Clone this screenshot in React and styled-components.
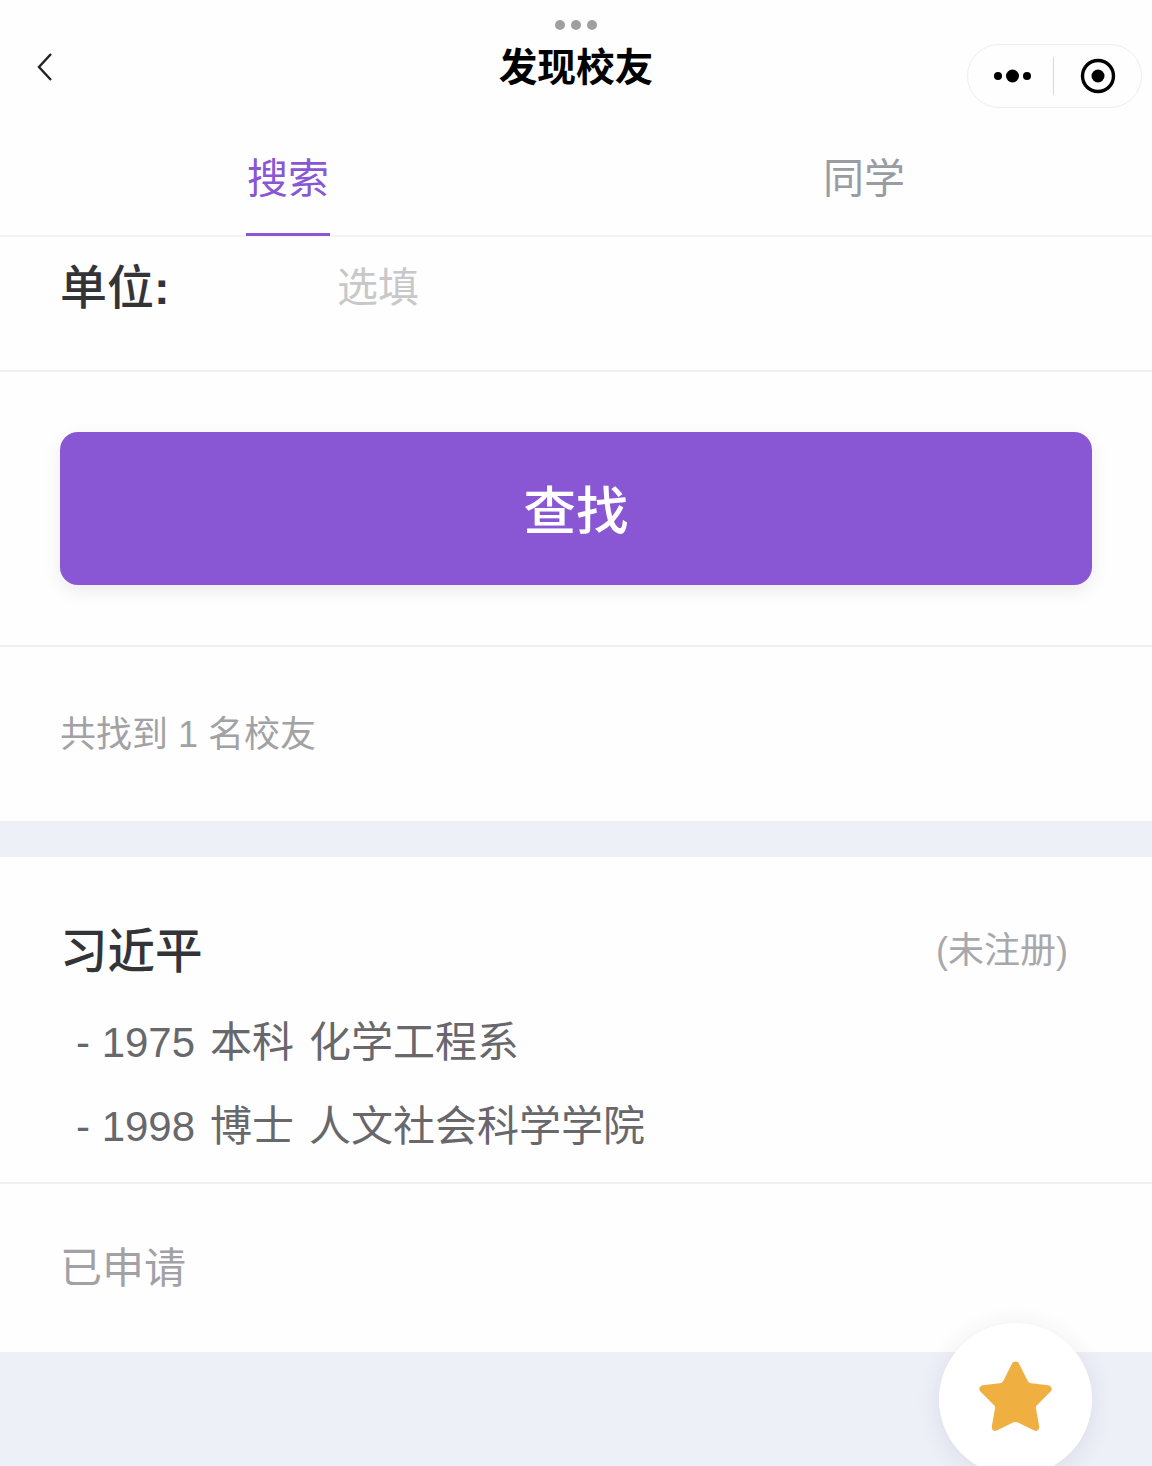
import React from 'react';
import styled, { createGlobalStyle } from 'styled-components';

const GlobalStyle = createGlobalStyle`
  html, body {
    margin: 0;
    padding: 0;
    background: #eef0f8;
  }
  body {
    font-family: "Liberation Sans", "Noto Sans CJK SC", sans-serif;
  }
`;

// //////////////// PAGE //////////////// //
const Page = styled.div`
  position: relative;
  width: 1152px;
  height: 1466px;
  overflow: hidden;
  background: #eef0f8;
`;

// //////////////// NAV BAR //////////////// //
const NavBar = styled.header`
  height: 124px;
  background: #fefefe;
  display: grid;
  grid-template-columns: 1fr auto 1fr;
  align-items: start;
  position: relative;
`;

const LoadingDots = styled.div`
  position: absolute;
  top: 20px;
  left: 555px;
  display: flex;
  gap: 6px;

  span {
    width: 10px;
    height: 10px;
    border-radius: 50%;
    background: #a0a0a0;
  }
`;

const BackButton = styled.div`
  padding: 52px 0 0 37px;
  line-height: 0;
`;

const Title = styled.h1`
  margin: 0;
  padding-top: 40px;
  font-size: 38.7px;
  line-height: 56px;
  font-weight: 700;
  color: #000;
`;

const Capsule = styled.div`
  justify-self: end;
  margin: 44px 10px 0 0;
  width: 175px;
  height: 64px;
  box-sizing: border-box;
  border: 1px solid #eeeeee;
  border-radius: 32px;
  display: grid;
  grid-template-columns: 85px 1px 1fr;
  align-items: center;
  background: #fefefe;
`;

const CapsuleCell = styled.div`
  box-sizing: border-box;
  display: flex;
  align-items: center;
  justify-content: center;
  line-height: 0;
  padding-left: ${(props) => props.$nudge || 0}px;
`;

const CapsuleDivider = styled.div`
  width: 1px;
  height: 38px;
  background: #d8d8d8;
`;

// //////////////// TABS //////////////// //
const TabBar = styled.nav`
  height: 113px;
  box-sizing: border-box;
  background: #fefefe;
  border-bottom: 2px solid #f3f3f6;
  display: grid;
  grid-template-columns: 576px 576px;
`;

const Tab = styled.div`
  display: flex;
  justify-content: center;
`;

const TabLabel = styled.div`
  height: 112px;
  box-sizing: border-box;
  padding: 25px 1px 0;
  font-size: 41px;
  line-height: 60px;
  color: ${(props) => (props.$active ? '#8a57d4' : '#9a9ca3')};
  border-bottom: ${(props) => (props.$active ? '3px solid #8a57d4' : 'none')};
`;

// //////////////// SECTIONS //////////////// //
const Section = styled.section`
  height: ${(props) => props.$height}px;
  box-sizing: border-box;
  background: #fefefe;
  border-bottom: 2px solid #f0f0f4;
`;

const FieldRow = styled(Section)`
  display: flex;
  align-items: flex-start;
  padding: 16px 0 0 60px;
`;

const FieldLabel = styled.div`
  width: 277px;
  font-size: 47px;
  line-height: 70px;
  font-weight: 500;
  color: #333438;

  b {
    font-weight: 700;
  }
`;

const FieldHint = styled.div`
  font-size: 41px;
  line-height: 70px;
  color: #c8c8c8;
`;

const ButtonSection = styled(Section)`
  padding: 60px 60px 0;
`;

const SearchButton = styled.div`
  height: 153px;
  box-sizing: border-box;
  padding-bottom: 3px;
  border-radius: 18px;
  background: #8a57d4;
  box-shadow: 0 6px 18px rgba(0, 0, 0, 0.08);
  display: flex;
  align-items: center;
  justify-content: center;
  font-size: 52.5px;
  font-weight: 500;
  color: #fff;
`;

const MutedRow = styled(Section)`
  padding: ${(props) => props.$top}px 0 0 60px;
  font-size: ${(props) => props.$size}px;
  line-height: 60px;
  color: #a2a2a6;
  white-space: pre;
`;

const Gap = styled.div`
  height: 34px;
  background: #eef0f8;
`;

// //////////////// RESULT CARD //////////////// //
const Card = styled(Section)`
  padding: 57px 84px 0 60px;
`;

const CardHeader = styled.div`
  display: flex;
  justify-content: space-between;
  align-items: center;
  height: 66px;
`;

const Name = styled.div`
  font-size: 47.5px;
  font-weight: 500;
  color: #333438;
`;

const Status = styled.div`
  font-size: 36px;
  color: #a8a8ac;
`;

const Degree = styled.div`
  margin-left: 16px;
  height: 84px;
  display: flex;
  gap: 15px;
  font-size: 42px;
  line-height: 84px;
  color: #68686c;
  white-space: pre;
`;

const DegreeList = styled.div`
  margin-top: 21px;
`;

// //////////////// FLOATING BUTTON //////////////// //
const Fab = styled.div`
  position: absolute;
  left: 939px;
  top: 1323px;
  width: 153px;
  height: 153px;
  box-sizing: border-box;
  padding-top: 38px;
  border-radius: 50%;
  background: #fff;
  box-shadow: 0 4px 24px rgba(40, 50, 90, 0.1);
  display: flex;
  align-items: flex-start;
  justify-content: center;
`;

const degrees = [
  ['- 1975', '本科', '化学工程系'],
  ['- 1998', '博士', '人文社会科学学院'],
];

const App = () => (
  <Page>
    <GlobalStyle />
    <NavBar>
      <LoadingDots>
        <span />
        <span />
        <span />
      </LoadingDots>
      <BackButton>
        <svg width="16" height="30" viewBox="0 0 16 30" fill="none">
          <path d="M14 2 L2 15 L14 28" stroke="#222" strokeWidth="2.4" />
        </svg>
      </BackButton>
      <Title>发现校友</Title>
      <Capsule>
        <CapsuleCell $nudge={5}>
          <svg width="40" height="16" viewBox="0 0 40 16" fill="#000">
            <circle cx="5" cy="8" r="4" />
            <circle cx="19.5" cy="8" r="6.5" />
            <circle cx="34" cy="8" r="4" />
          </svg>
        </CapsuleCell>
        <CapsuleDivider />
        <CapsuleCell>
          <svg width="36" height="36" viewBox="0 0 36 36" fill="none">
            <circle cx="18" cy="18" r="15.5" stroke="#000" strokeWidth="3.4" />
            <circle cx="18" cy="18" r="6.5" fill="#000" />
          </svg>
        </CapsuleCell>
      </Capsule>
    </NavBar>
    <TabBar>
      <Tab>
        <TabLabel $active>搜索</TabLabel>
      </Tab>
      <Tab>
        <TabLabel>同学</TabLabel>
      </Tab>
    </TabBar>
    <FieldRow $height={135}>
      <FieldLabel>单位<b>:</b></FieldLabel>
      <FieldHint>选填</FieldHint>
    </FieldRow>
    <ButtonSection $height={275}>
      <SearchButton>查找</SearchButton>
    </ButtonSection>
    <MutedRow $height={176} $top={58} $size={36}>共找到 1 名校友</MutedRow>
    <Gap />
    <Card $height={327}>
      <CardHeader>
        <Name>习近平</Name>
        <Status>(未注册)</Status>
      </CardHeader>
      <DegreeList>
        {degrees.map((parts) => (
          <Degree key={parts[0]}>
            {parts.map((part) => (
              <span key={part}>{part}</span>
            ))}
          </Degree>
        ))}
      </DegreeList>
    </Card>
    <MutedRow $height={170} $top={55} $size={42}>已申请</MutedRow>
    <Fab>
      <svg width="75" height="71" viewBox="0 3 76 71">
        <path
          d="M38 3 C40 3 41 4 42 6 L50 22 C51 24 52 25 54 25 L71 27 C75 28 76 31 73 34 L60 47 C59 48 58 50 59 52 L62 69 C62 73 60 74 57 73 L41 65 C39 64 37 64 35 65 L19 73 C16 74 14 73 14 69 L17 52 C18 50 17 48 16 47 L3 34 C0 31 1 28 5 27 L22 25 C24 25 25 24 26 22 L34 6 C35 4 36 3 38 3 Z"
          fill="#efb041"
        />
      </svg>
    </Fab>
  </Page>
);

export default App;
